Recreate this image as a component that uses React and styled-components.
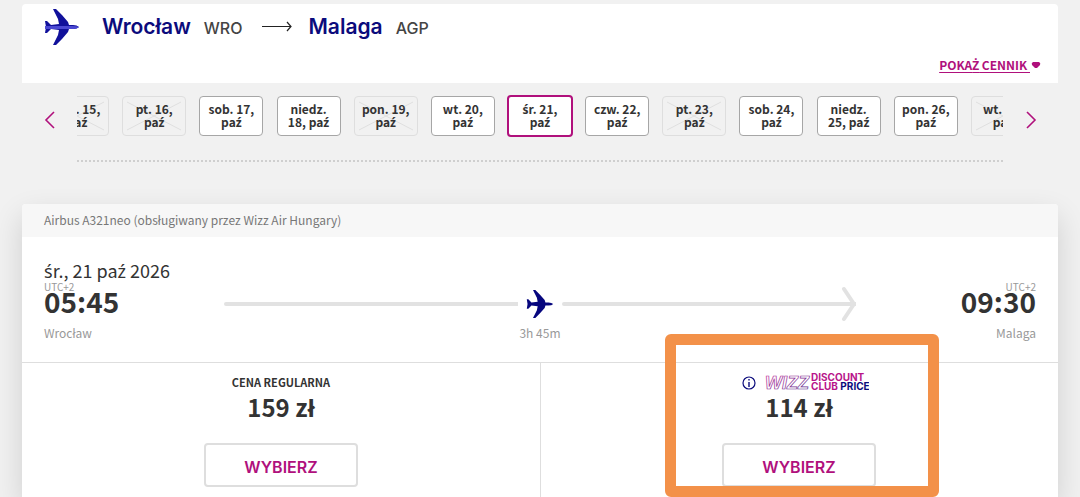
import React from "react";
import styled, { createGlobalStyle } from "styled-components";

const body = `"Noto Sans CJK SC", "Noto Sans", sans-serif`;
const display = `Inter, "Noto Sans", sans-serif`;
const magenta = "#b0107c";
const navy = "#0b0b7c";

const Global = createGlobalStyle`
  *, *::before, *::after { box-sizing: border-box; }
  body { margin: 0; background: #f1f1f1; color: #333; font-family: ${body}; overflow-x: hidden; }
  h1, h2, p { margin: 0; font-weight: 400; }
  button { font: inherit; color: inherit; cursor: pointer; }
`;

const Accent = styled.span`
  font-family: "Noto Sans", sans-serif;
  line-height: 0;
`;

const Page = styled.main`
  padding: 4px 22px 0;
`;

const RouteHeader = styled.header`
  display: flex;
  flex-direction: column;
  height: 79px;
  padding: 3px 17px 0 22px;
  background: #fff;
  border-radius: 4px 4px 0 0;
`;

const Route = styled.h1`
  display: flex;
  align-items: center;
  height: 40px;
  font-family: ${display};
  line-height: 24px;
`;

const HeaderPlane = styled.span`
  display: flex;
  width: 36px;
  margin-right: 22px;
`;

const City = styled.span`
  color: ${navy};
  font-size: 21px;
  font-weight: 600;
`;

const Code = styled.span`
  margin-left: 13px;
  padding-top: 2px;
  color: #444;
  font-size: 16px;
  font-weight: 500;
`;

const RouteArrow = styled.svg`
  width: 30px;
  height: 12px;
  margin: 0 16px 0 20px;
`;

const FareLink = styled.a`
  display: flex;
  align-items: center;
  gap: 1px;
  align-self: flex-end;
  margin-top: 8px;
  color: ${magenta};
  font-size: 12px;
  font-weight: 700;
  line-height: 20px;
  text-decoration: none;
`;

const FareText = styled.span`
  white-space: pre;
  text-decoration: underline;
  text-decoration-thickness: 1px;
  text-underline-offset: 2px;
`;

const Calendar = styled.nav`
  display: flex;
  height: 79px;
`;

const ArrowButton = styled.button`
  flex: 0 0 55px;
  height: 77px;
  padding: 0;
  border: 0;
  background: none;
  color: ${magenta};
`;

const Track = styled.div`
  display: flex;
  flex: 1;
  min-width: 0;
  align-items: flex-start;
  justify-content: center;
  padding-top: 12px;
  overflow: hidden;
  border-bottom: 2px dotted #cfcfcf;
`;

const Slot = styled.div`
  display: flex;
  flex: 0 0 calc(100% / 12);
  align-items: center;
  justify-content: center;
  height: 42px;
`;

const Day = styled.button`
  position: relative;
  width: ${(p) => (p.$state === "selected" ? 66 : 64)}px;
  height: ${(p) => (p.$state === "selected" ? 42 : 40)}px;
  padding: 0 4px 2px;
  border: ${(p) =>
    p.$state === "selected"
      ? `2px solid ${magenta}`
      : p.$state === "off"
      ? "1px solid #dedede"
      : "1px solid #a6a6a6"};
  border-radius: 4px;
  background: ${(p) => (p.$state === "off" ? "#f1f1f1" : "#fff")};
  font-size: 12px;
  font-weight: 700;
  line-height: 13px;
`;

const Cross = styled.svg`
  position: absolute;
  inset: 4px;
  width: 54px;
  height: 30px;
`;

const DayLabel = styled.span`
  position: relative;
  display: block;
  white-space: nowrap;
`;

const Flight = styled.article`
  margin-top: 42px;
  background: #fff;
  border-radius: 4px 4px 0 0;
  box-shadow: 0 12px 30px rgba(0, 0, 0, 0.14);
`;

const Aircraft = styled.p`
  height: 33px;
  padding: 0 22px;
  background: #f7f7f7;
  border-radius: 4px 4px 0 0;
  color: #777;
  font-size: 12px;
  line-height: 31px;
`;

const Journey = styled.section`
  height: 125px;
  padding: 22px 22px 0;
`;

const JourneyDate = styled.h2`
  margin-bottom: 2px;
  font-size: 18px;
  line-height: 22px;
`;

const Timeline = styled.div`
  display: grid;
  grid-template-columns: 180px 1fr 180px;
`;

const Stop = styled.div`
  display: flex;
  flex-direction: column;
  text-align: ${(p) => (p.$end ? "right" : "left")};
`;

const Zone = styled.span`
  height: 7px;
  color: #999;
  font-size: 10px;
  line-height: 8px;
`;

const Time = styled.time`
  font-size: 28px;
  font-weight: 700;
  line-height: 22px;
`;

const Muted = styled.span`
  margin-top: ${(p) => p.$gap}px;
  color: #999;
  font-size: 12px;
  line-height: 20px;
`;

const Path = styled.div`
  display: flex;
  flex-direction: column;
  align-items: center;
  padding-top: 3px;
`;

const PathLine = styled.div`
  display: flex;
  align-items: center;
  width: 100%;
  height: 36px;
`;

const Bar = styled.span`
  flex: 1;
  height: 4px;
  background: #e2e2e2;
  border-radius: 2px 0 0 2px;
`;

const Tip = styled.svg`
  width: 16px;
  height: 36px;
  margin-left: -16px;
`;

const SmallPlane = styled.span`
  display: flex;
  width: 28px;
  margin: 0 8px;
`;

const Fares = styled.section`
  display: grid;
  grid-template-columns: 1fr 1fr;
  border-top: 1px solid #dedede;
`;

const Fare = styled.div`
  position: relative;
  display: flex;
  flex-direction: column;
  align-items: center;
  padding: 9px 0 10px;

  & + & {
    box-shadow: inset 1px 0 #dedede;
  }
`;

const FareName = styled.div`
  display: flex;
  align-items: center;
  height: 20px;
  padding-left: ${(p) => (p.$club ? 12 : 0)}px;
  font-size: 11px;
  font-weight: 700;
`;

const Price = styled.p`
  font-size: 24px;
  font-weight: 700;
  line-height: 30px;
`;

const Choose = styled.button`
  width: 154px;
  height: 44px;
  margin-top: 21px;
  padding: 4px 0 0;
  border: 2px solid #dedede;
  border-radius: 4px;
  background: #fff;
  color: ${magenta};
  font-family: ${display};
  font-size: 16px;
  font-weight: 600;
`;

const Highlight = styled.div`
  position: absolute;
  top: -29px;
  bottom: 0;
  left: calc(50% - 134px);
  width: 274px;
  border: 11px solid #f39149;
  border-radius: 6px;
  pointer-events: none;
`;

const InfoButton = styled.button`
  width: 14px;
  height: 14px;
  margin: 2px 9px 0 0;
  padding: 0;
  border: 0;
  background: none;
  line-height: 0;
`;

const ClubLogo = styled.svg`
  width: 104px;
  height: 22px;
`;

function Pl({ children }) {
  return children
    .split(/([śźŻ])/)
    .map((part, i) => (i % 2 ? <Accent key={i}>{part}</Accent> : part));
}

function PlaneArt({ fill, fuselage }) {
  return (
    <svg width="100%" viewBox="0 0 36 36" aria-hidden="true">
      <path
        d="M9 0h3l6 6 6 7 1 3h4q4 0 6 2-2 2-6 2h-4l-1 3-6 7-6 6H9l5-10 1-5-8-1-4 4H1l1-6-1-6h2l4 4 8-1-1-5z"
        fill={fill}
      />
      {fuselage && <path d="M1 17h27q5 0 7 1-2 2-7 2H1z" fill={fuselage} />}
    </svg>
  );
}

const days = [
  ["czw. 15,", "paź", "off"],
  ["pt. 16,", "paź", "off"],
  ["sob. 17,", "paź", "open"],
  ["niedz.", "18, paź", "open"],
  ["pon. 19,", "paź", "off"],
  ["wt. 20,", "paź", "open"],
  ["śr. 21,", "paź", "selected"],
  ["czw. 22,", "paź", "open"],
  ["pt. 23,", "paź", "off"],
  ["sob. 24,", "paź", "open"],
  ["niedz.", "25, paź", "open"],
  ["pon. 26,", "paź", "open"],
  ["wt. 27,", "paź", "off"],
];

function Chevron({ d }) {
  return (
    <svg width="12" height="18" viewBox="0 0 12 18" aria-hidden="true">
      <path d={d} fill="none" stroke="currentColor" strokeWidth="1.6" />
    </svg>
  );
}

export default function App() {
  return (
    <>
      <Global />
      <Page>
        <RouteHeader>
          <Route>
            <HeaderPlane>
              <PlaneArt fill="#11119b" fuselage="#4a48d2" />
            </HeaderPlane>
            <City>Wrocław</City>
            <Code>WRO</Code>
            <RouteArrow viewBox="0 0 30 12" aria-hidden="true">
              <path d="M0 5.500h29M25 1l4 4.500-4 4.500" fill="none" stroke="#222" strokeWidth="1.2" />
            </RouteArrow>
            <City>Malaga</City>
            <Code>AGP</Code>
          </Route>
          <FareLink href="#cennik">
            <FareText>
              <Pl>{"POKAŻ CENNIK "}</Pl>
            </FareText>
            <svg width="10" height="8" viewBox="0 0 10 8" aria-hidden="true">
              <path d="M2 1h6q2 1 1 3L6 7H4L1 4Q0 2 2 1z" fill="currentColor" />
            </svg>
          </FareLink>
        </RouteHeader>

        <Calendar aria-label="Daty lotów">
          <ArrowButton aria-label="Wcześniejsze daty">
            <Chevron d="M10 1L2 9l8 8" />
          </ArrowButton>
          <Track>
            {days.map(([top, bottom, state]) => (
              <Slot key={top + bottom}>
                <Day $state={state} disabled={state === "off"}>
                  {state === "off" && (
                    <Cross viewBox="0 0 54 30" aria-hidden="true">
                      <path d="M0 1l54 28M54 1L0 29" stroke="#dfdfdf" />
                    </Cross>
                  )}
                  <DayLabel>
                    <Pl>{top}</Pl>
                    <br />
                    <Pl>{bottom}</Pl>
                  </DayLabel>
                </Day>
              </Slot>
            ))}
          </Track>
          <ArrowButton aria-label="Późniejsze daty">
            <Chevron d="M2 1l8 8-8 8" />
          </ArrowButton>
        </Calendar>

        <Flight>
          <Aircraft>Airbus A321neo (obsługiwany przez Wizz Air Hungary)</Aircraft>
          <Journey>
            <JourneyDate>
              <Pl>śr., 21 paź 2026</Pl>
            </JourneyDate>
            <Timeline>
              <Stop>
                <Zone>UTC+2</Zone>
                <Time>05:45</Time>
                <Muted $gap={11}>Wrocław</Muted>
              </Stop>
              <Path>
                <PathLine>
                  <Bar />
                  <SmallPlane>
                    <PlaneArt fill="#06067e" />
                  </SmallPlane>
                  <Bar />
                  <Tip viewBox="0 0 16 36" aria-hidden="true">
                    <path d="M4 3l10 15L4 33" fill="none" stroke="#e2e2e2" strokeWidth="4" strokeLinecap="round" />
                  </Tip>
                </PathLine>
                <Muted $gap={1}>3h 45m</Muted>
              </Path>
              <Stop $end>
                <Zone>UTC+2</Zone>
                <Time>09:30</Time>
                <Muted $gap={11}>Malaga</Muted>
              </Stop>
            </Timeline>
          </Journey>

          <Fares>
            <Fare>
              <FareName>CENA REGULARNA</FareName>
              <Price>159 zł</Price>
              <Choose>WYBIERZ</Choose>
            </Fare>
            <Fare>
              <FareName $club>
                <InfoButton aria-label="Informacje">
                  <svg width="14" height="14" viewBox="0 0 14 14" aria-hidden="true">
                    <circle cx="7" cy="7" r="6" fill="none" stroke={navy} strokeWidth="1.2" />
                    <path d="M7 6v5M7 3v1.500" stroke={navy} strokeWidth="1.400" />
                  </svg>
                </InfoButton>
                <ClubLogo viewBox="0 0 104 22" role="img" aria-label="Wizz Discount Club Price">
                  <defs>
                    <linearGradient id="outline" x1="0" y1="0" x2="1" y2="1">
                      <stop offset="0" stopColor="#c5309a" />
                      <stop offset="1" stopColor="#4a2b8c" />
                    </linearGradient>
                  </defs>
                  <text x="0" y="18" fontFamily="Liberation Sans, sans-serif" fontStyle="italic" fontWeight="700" fontSize="18" fill="none" stroke="url(#outline)" strokeWidth="0.7">
                    WIZZ
                  </text>
                  <g fontFamily="Inter, sans-serif" fontWeight="700" fontSize="10">
                    <text x="46" y="10" fill="#b8148a">DISCOUNT</text>
                    <text x="46" y="19" fill="#b8148a">
                      CLUB <tspan fill={navy}>PRICE</tspan>
                    </text>
                  </g>
                </ClubLogo>
              </FareName>
              <Price>114 zł</Price>
              <Choose>WYBIERZ</Choose>
              <Highlight />
            </Fare>
          </Fares>
        </Flight>
      </Page>
    </>
  );
}
